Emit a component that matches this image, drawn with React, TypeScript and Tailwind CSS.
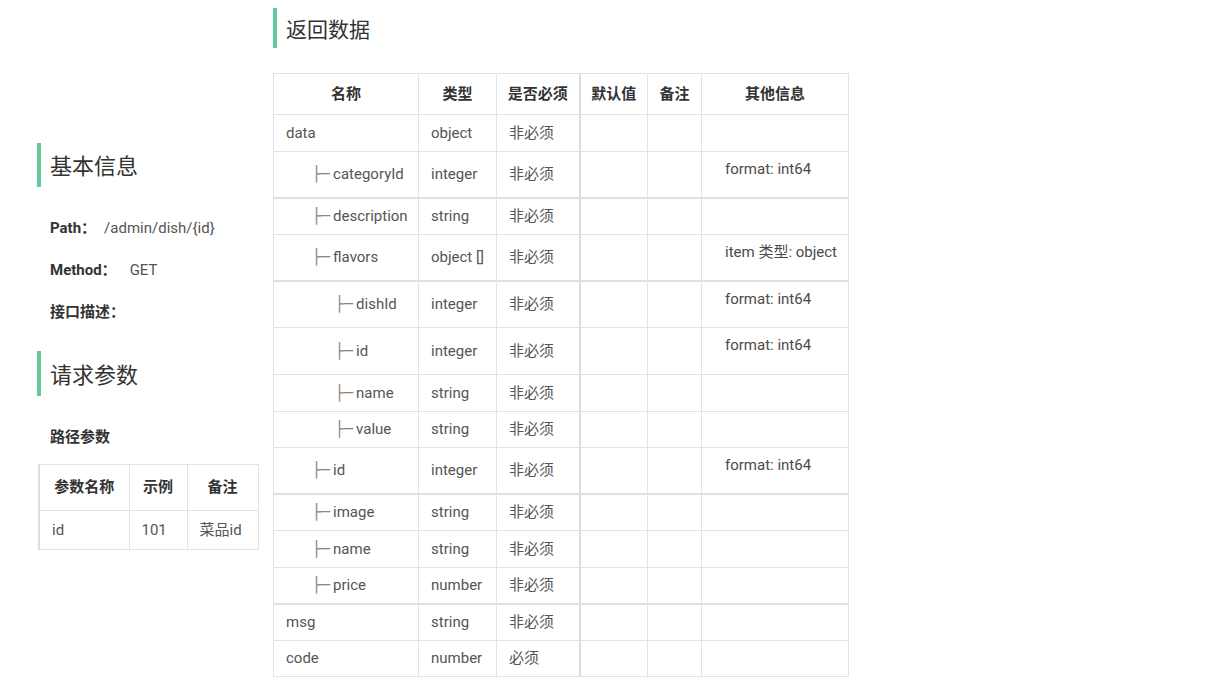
import React from "react";

type Row = {
  name: string;
  level: number;
  type: string;
  req?: string;
  info?: string;
  h: string;
  thick?: boolean;
};

const rows: Row[] = [
  { name: "data", level: 0, type: "object", h: "h-[37px]" },
  { name: "categoryId", level: 1, type: "integer", info: "format: int64", h: "h-[46px]" },
  { name: "description", level: 1, type: "string", h: "h-[37px]", thick: true },
  { name: "flavors", level: 1, type: "object []", info: "item 类型: object", h: "h-[46px]" },
  { name: "dishId", level: 2, type: "integer", info: "format: int64", h: "h-[47px]", thick: true },
  { name: "id", level: 2, type: "integer", info: "format: int64", h: "h-[47px]" },
  { name: "name", level: 2, type: "string", h: "h-[37px]" },
  { name: "value", level: 2, type: "string", h: "h-[36px]" },
  { name: "id", level: 1, type: "integer", info: "format: int64", h: "h-[46px]" },
  { name: "image", level: 1, type: "string", h: "h-[37px]", thick: true },
  { name: "name", level: 1, type: "string", h: "h-[37px]" },
  { name: "price", level: 1, type: "number", h: "h-[36px]" },
  { name: "msg", level: 0, type: "string", h: "h-[37px]", thick: true },
  { name: "code", level: 0, type: "number", req: "必须", h: "h-[36px]" },
];

const font = {
  fontFamily: 'Roboto, "Noto Sans CJK SC", sans-serif',
};

function Heading({ text, size }: { text: string; size: string }) {
  return (
    <div className="flex items-center border-l-4 border-[#62c99a] pl-[9px] h-full">
      <span className={`${size} text-[#333] leading-none pt-[4px]`}>{text}</span>
    </div>
  );
}

function NameCell({ row }: { row: Row }) {
  const indent = row.level === 0 ? "pl-[12px]" : row.level === 1 ? "pl-[38px]" : "pl-[61px]";
  return (
    <td className={`${indent} border border-[#e3e3e3] align-middle`}>
      <span className="inline-flex items-center">
        {row.level > 0 && (
          <span
            className="text-[#8f8377] mr-[3px] text-[15px] font-bold leading-none"
            style={{ fontFamily: '"DejaVu Sans", sans-serif' }}
          >
            ├─
          </span>
        )}
        {row.name}
      </span>
    </td>
  );
}

export default function App() {
  return (
    <div className="min-h-[685px] bg-white text-[15px] text-[#555]" style={font}>
      <div className="flex pl-[37px]">
        {/* left column */}
        <div className="w-[221px] pt-[143px] shrink-0">
          <div className="h-[44px]">
            <Heading text="基本信息" size="text-[22px]" />
          </div>
          <div className="pl-[13px] mt-[30px] flex flex-col gap-[20px]">
            <div className="h-[22px] flex items-center">
              <span className="font-bold text-[#333]">Path：</span>
              <span className="ml-[8px]">/admin/dish/{"{id}"}</span>
            </div>
            <div className="h-[22px] flex items-center">
              <span className="font-bold text-[#333]">Method：</span>
              <span className="ml-[13px]">GET</span>
            </div>
            <div className="h-[22px] flex items-center">
              <span className="font-bold text-[#333]">接口描述：</span>
            </div>
          </div>
          <div className="h-[45px] mt-[28px]">
            <Heading text="请求参数" size="text-[22px]" />
          </div>
          <div className="pl-[13px] mt-[30px] h-[22px] flex items-center font-bold text-[#333]">
            路径参数
          </div>
          <table className="mt-[16px] ml-[1px] w-[219px] border-collapse table-fixed">
            <colgroup>
              <col className="w-[90px]" />
              <col className="w-[58px]" />
              <col className="w-[71px]" />
            </colgroup>
            <thead>
              <tr className="h-[46px] font-bold text-[#333]">
                <th className="border border-[#e3e3e3] border-l-2 border-l-[#dcdcdc] text-center">参数名称</th>
                <th className="border border-[#e3e3e3] text-center">示例</th>
                <th className="border border-[#e3e3e3] text-center">备注</th>
              </tr>
            </thead>
            <tbody>
              <tr className="h-[39px]">
                <td className="border border-[#e3e3e3] border-l-2 border-l-[#dcdcdc] pl-[12px]">id</td>
                <td className="border border-[#e3e3e3] pl-[12px]">101</td>
                <td className="border border-[#e3e3e3] pl-[12px]">菜品id</td>
              </tr>
            </tbody>
          </table>
        </div>

        {/* right column */}
        <div className="ml-[15px] pt-[8px] w-[576px]">
          <div className="h-[40px]">
            <Heading text="返回数据" size="text-[21px]" />
          </div>
          <table className="mt-[25px] w-[575px] border-collapse table-fixed">
            <colgroup>
              <col className="w-[145px]" />
              <col className="w-[78px]" />
              <col className="w-[83px]" />
              <col className="w-[68px]" />
              <col className="w-[54px]" />
              <col className="w-[147px]" />
            </colgroup>
            <thead>
              <tr className="h-[41px] font-bold text-[#333]">
                <th className="border border-[#e3e3e3] text-center">名称</th>
                <th className="border border-[#e3e3e3] text-center">类型</th>
                <th className="border border-[#e3e3e3] border-r-2 border-r-[#dcdcdc] text-center">是否必须</th>
                <th className="border border-[#e3e3e3] text-center">默认值</th>
                <th className="border border-[#e3e3e3] text-center">备注</th>
                <th className="border border-[#e3e3e3] text-center">其他信息</th>
              </tr>
            </thead>
            <tbody>
              {rows.map((row, idx) => (
                <tr
                  key={idx}
                  className={`${row.h} ${row.thick ? "border-t-2 border-t-[#e0e0e0]" : ""}`}
                >
                  <NameCell row={row} />
                  <td className="border border-[#e3e3e3] pl-[12px]">{row.type}</td>
                  <td className="border border-[#e3e3e3] border-r-2 border-r-[#dcdcdc] pl-[12px]">
                    {row.req ?? "非必须"}
                  </td>
                  <td className="border border-[#e3e3e3]"></td>
                  <td className="border border-[#e3e3e3]"></td>
                  <td className="border border-[#e3e3e3] align-top pl-[23px] pt-[6px] text-[#4a4a4a]">
                    {row.info}
                  </td>
                </tr>
              ))}
            </tbody>
          </table>
        </div>
      </div>
    </div>
  );
}
